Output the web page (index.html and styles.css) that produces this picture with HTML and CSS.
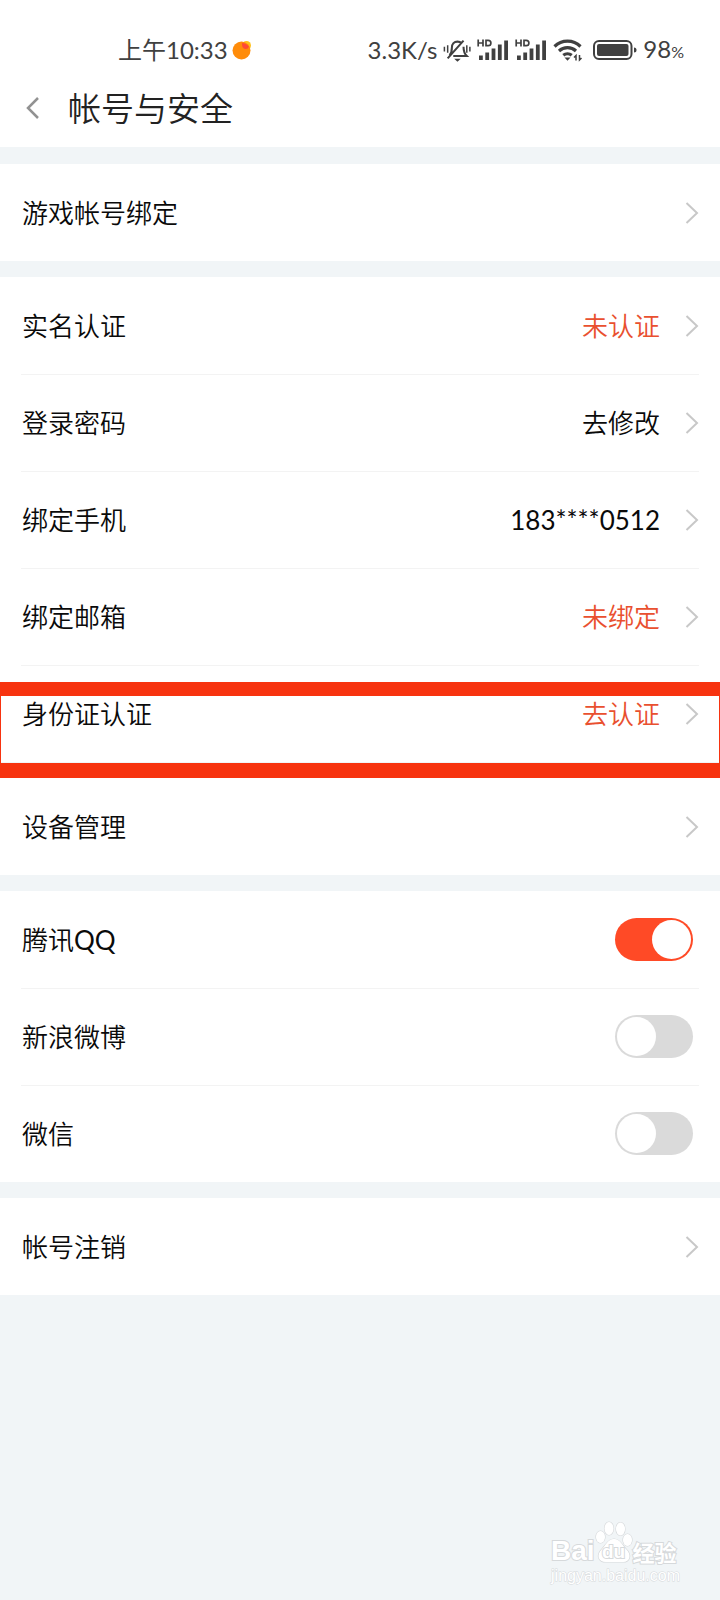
FILE: index.html
```
<!DOCTYPE html>
<html lang="zh-CN">
<head>
<meta charset="utf-8">
<meta name="viewport" content="width=device-width, initial-scale=1">
<title>帐号与安全</title>
<link rel="stylesheet" href="styles.css">
</head>
<body>
<svg class="defs" aria-hidden="true">
  <symbol id="chevron" viewBox="0 0 14 22"><path d="M1.5 1 L12 11 L1.5 21" fill="none" stroke="currentColor" stroke-width="2"/></symbol>
  <symbol id="signal" viewBox="0 0 32 24">
    <path d="M1.200 1.500v7M6 1.500v7M1.200 5H6M9 2.300h2.200a2.700 2.700 0 0 1 0 5.400H9z" fill="none" stroke="currentColor" stroke-width="1.700"/>
    <path d="M2 17.500h3.800V22H2zM8.300 14.500h3.800V22H8.300zM14.600 10.500h3.800V22h-3.800zM20.900 6.500h3.800V22h-3.800zM27.200 2.500H31V22h-3.800z" fill="currentColor"/>
  </symbol>
</svg>
<div class="page">
  <header class="header">
    <div class="status">
      <div class="status-left">
        <span>上午10:33</span>
        <svg width="20" height="20" viewBox="0 0 20 20" aria-hidden="true"><circle cx="14.500" cy="5.500" r="4.500" fill="#ffc21c"/><circle cx="9.500" cy="10.500" r="9" fill="#ff8c0a"/><path d="M10 3a9 9 0 0 1 7 3.500q-1 3-4 2.500-3.500-1-3-6z" fill="#ff4a36"/></svg>
      </div>
      <div class="status-right">
        <span>3.3K/s</span>
        <svg width="28" height="26" viewBox="0 0 30 26" fill="none" stroke="currentColor" stroke-width="2.200" aria-hidden="true"><path d="M7 18.500c2-2 2.500-4 2.500-8 0-4 2.500-6.500 6-6.500 2 0 3.500.8 4.500 2M22 9.500c0 5 .5 7 3.500 10H11M5 22 22 3"/><path d="M12 22.500h7l-3.500 3z" fill="currentColor" stroke="none"/><path d="M1.500 9.500v5M5 8v8M25.500 8v8M28.800 9.500v5" stroke-width="1.600"/></svg>
        <svg width="32" height="24" aria-hidden="true"><use href="#signal"/></svg>
        <svg width="32" height="24" aria-hidden="true"><use href="#signal"/></svg>
        <svg width="30" height="24" viewBox="0 0 30 24" fill="none" stroke="currentColor" stroke-width="3.200" aria-hidden="true"><path d="M1.500 8.500a18.500 18.500 0 0 1 26 0M6 13a12.500 12.500 0 0 1 17 0M10.300 17.300a6.500 6.500 0 0 1 8.400 0"/><path d="M11.500 19.500h6l-3 3.300z" fill="currentColor" stroke="none"/><path d="M23 22.500v-5l-2 2M26.500 17v5l2-2" stroke-width="1.500"/></svg>
        <svg class="battery" width="44" height="20" viewBox="0 0 44 20" aria-hidden="true"><rect x="1" y="1" width="37.500" height="18" rx="5" fill="none" stroke="currentColor" stroke-width="2"/><rect x="4" y="4" width="31.500" height="12" rx="2" fill="currentColor"/><path d="M41 7.500q2.500 0 2.500 2.500t-2.500 2.500z" fill="currentColor"/></svg>
        <span>98<small class="percent">%</small></span>
      </div>
    </div>
    <div class="titlebar">
      <button class="back" type="button" aria-label="返回"><svg width="14" height="22" viewBox="0 0 14 22" aria-hidden="true"><path d="M12 1 2 11l10 10" fill="none" stroke="currentColor" stroke-width="2.500"/></svg></button>
      <h1 class="title">帐号与安全</h1>
    </div>
  </header>

  <main class="groups">
    <section class="group">
      <button class="row" type="button"><span>游戏帐号绑定</span><svg class="arrow"><use href="#chevron"/></svg></button>
    </section>
    <section class="group">
      <button class="row" type="button"><span>实名认证</span><span class="value alert">未认证</span><svg class="arrow"><use href="#chevron"/></svg></button>
      <button class="row" type="button"><span>登录密码</span><span class="value">去修改</span><svg class="arrow"><use href="#chevron"/></svg></button>
      <button class="row" type="button"><span>绑定手机</span><span class="value latin">183****0512</span><svg class="arrow"><use href="#chevron"/></svg></button>
      <button class="row" type="button"><span>绑定邮箱</span><span class="value alert">未绑定</span><svg class="arrow"><use href="#chevron"/></svg></button>
      <button class="row marked" type="button"><span>身份证认证</span><span class="value alert">去认证</span><svg class="arrow"><use href="#chevron"/></svg></button>
    </section>
    <section class="group">
      <button class="row" type="button"><span>设备管理</span><svg class="arrow"><use href="#chevron"/></svg></button>
    </section>
    <section class="group">
      <label class="row"><span>腾讯<span class="latin">QQ</span></span><input class="switch" type="checkbox" checked></label>
      <label class="row"><span>新浪微博</span><input class="switch" type="checkbox"></label>
      <label class="row"><span>微信</span><input class="switch" type="checkbox"></label>
    </section>
    <section class="group">
      <button class="row" type="button"><span>帐号注销</span><svg class="arrow"><use href="#chevron"/></svg></button>
    </section>
  </main>

  <div class="watermark">
    <div class="brand">
      <span class="bai">Bai</span>
      <span class="paw">
        <svg width="38" height="42" viewBox="0 0 38 42" aria-hidden="true"><g fill="#fff" stroke="#d6d9db" stroke-width="1.200"><ellipse cx="5.500" cy="16" rx="4.500" ry="6"/><ellipse cx="14" cy="7.500" rx="4.500" ry="6.500"/><ellipse cx="25.500" cy="8" rx="4.500" ry="6.500"/><ellipse cx="32.500" cy="19" rx="4.500" ry="6"/><path d="M19 18c6 0 8 6 12 10 6 6 4 13-3 13H11c-8 0-10-7-4-13 4-4 6-10 12-10z"/></g></svg>
        <span class="du">du</span>
      </span>
      <span class="jingyan">经验</span>
    </div>
    <div class="site">jingyan.baidu.com</div>
  </div>
</div>
</body>
</html>
```
FILE: styles.css
```
* { box-sizing: border-box; }

body {
  margin: 0;
  background: #f1f5f7;
  color: #0a0a0a;
  font-family: Lato, "Noto Sans CJK SC", sans-serif;
}

.defs { position: absolute; width: 0; height: 0; }

.page { position: relative; min-height: 100vh; }

.header { background: #fff; padding-top: 32px; }

.status {
  display: flex;
  justify-content: space-between;
  align-items: center;
  height: 36px;
  padding: 0 36px 0 118px;
  color: #404040;
  font-size: 24px;
  line-height: 36px;
}

.status-left, .status-right { display: flex; align-items: center; }
.status-left { gap: 4px; }
.status-right { gap: 6px; }
.battery { margin-left: 4px; }
.percent { font-size: 16px; }

.titlebar {
  display: flex;
  align-items: center;
  gap: 28px;
  height: 79px;
  padding: 0 26px;
}

.back {
  display: flex;
  padding: 0;
  border: 0;
  background: none;
  color: #929292;
}

.title {
  margin: 0;
  color: #222;
  font-size: 33px;
  font-weight: 350;
  line-height: 48px;
}

.groups { display: grid; gap: 16px; padding-top: 17px; }

.group { background: #fff; }

.row {
  position: relative;
  display: flex;
  align-items: center;
  width: 100%;
  height: 97px;
  padding: 0 21px 0 22px;
  border: 0;
  background: none;
  color: inherit;
  font-family: inherit;
  font-size: 26px;
  font-weight: 350;
  line-height: 40px;
  text-align: left;
}

.row + .row::before {
  content: "";
  position: absolute;
  top: 0;
  left: 21px;
  right: 21px;
  height: 1px;
  background: #f3f3f3;
}

.row > :last-child { margin-left: auto; }
.row > .value { margin-left: auto; }
.value + .arrow.arrow { margin-left: 25px; }
.latin { font-weight: 400; }
.alert { color: #e9502f; }
.arrow { width: 14px; height: 22px; color: #c8c8c8; }

.marked { z-index: 1; }
.marked::after {
  content: "";
  position: absolute;
  inset: 17px 0 -16px;
  border: solid #f7330f;
  border-width: 14px 1px 15px;
}

.switch {
  appearance: none;
  width: 78px;
  height: 43px;
  margin: 0 6px;
  padding: 2px;
  border-radius: 22px;
  background: #dadada;
}
.switch::before {
  content: "";
  display: block;
  width: 39px;
  height: 39px;
  border-radius: 50%;
  background: #fff;
}
.switch:checked { background: #ff4a26; }
.switch:checked::before { margin-left: auto; }

.watermark {
  position: absolute;
  right: 40px;
  bottom: 14px;
  color: #fff;
  -webkit-text-stroke: 2px #d6d9db;
  paint-order: stroke fill;
}
.brand { display: flex; align-items: flex-end; height: 46px; }
.bai {
  font: bold 28px/30px "Liberation Sans", sans-serif;
}
.paw { position: relative; display: flex; padding-bottom: 3px; }
.du {
  position: absolute;
  right: 0;
  bottom: 4px;
  left: 0;
  font: bold 19px/20px "Liberation Sans", sans-serif;
  text-align: center;
}
.jingyan {
  font: bold 22px/30px "Noto Sans CJK SC", sans-serif;
}
.site {
  font: 16px/20px "Liberation Sans", sans-serif;
  -webkit-text-stroke-width: 1px;
}
```
